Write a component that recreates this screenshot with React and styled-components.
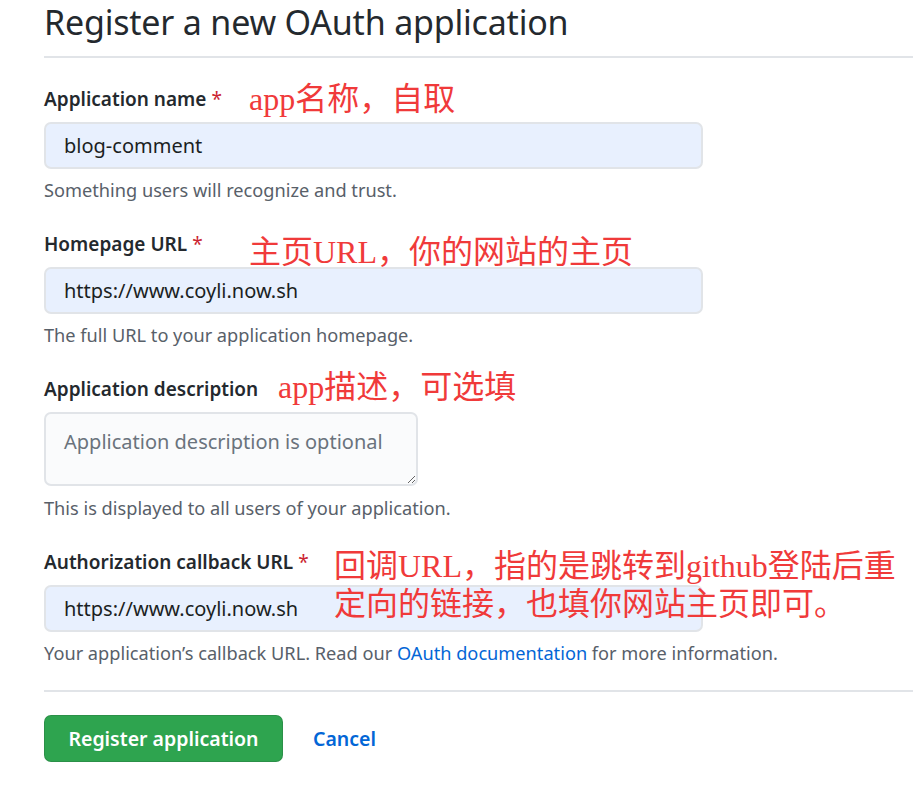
import React from 'react';
import styled, { createGlobalStyle } from 'styled-components';

const GlobalStyle = createGlobalStyle`
  body {
    margin: 0;
    background: #fff;
    font-family: "Noto Sans", "Open Sans", sans-serif;
    color: #24292e;
  }
`

const Page = styled.div`
  padding-left: 44px;
  width: 869px;
  height: 805px;
  overflow: hidden;
`

const Header = styled.div`
  border-bottom: 2px solid #e1e4e8;
  padding-top: 1px;
  padding-bottom: 13px;
  margin-bottom: 29px;
`

const Title = styled.h2`
  margin: 0;
  font-size: 34px;
  line-height: 42px;
  font-weight: 400;
  letter-spacing: -0.2px;
`

const Group = styled.div`
  position: relative;
  margin-bottom: ${p => p.gap ?? 31}px;
`

const Label = styled.label`
  display: block;
  font-size: 19px;
  line-height: 24px;
  font-weight: 600;
  margin-bottom: 11px;
`

const Star = styled.span`
  color: #cb2431;
  margin-left: 5px;
  font-weight: 400;
`

const Input = styled.input`
  display: block;
  box-sizing: border-box;
  width: 659px;
  height: 47px;
  padding: 0 18px;
  font-family: inherit;
  font-size: 20px;
  color: #1b1f23;
  background: #e8f0fe;
  border: 2px solid #e1e4e8;
  border-radius: 7px;
  outline: none;
`

const Textarea = styled.textarea`
  display: block;
  box-sizing: border-box;
  width: 374px;
  height: 74px;
  padding: 14px 18px;
  font-family: inherit;
  font-size: 20px;
  line-height: 28px;
  color: #24292e;
  background: #fafbfc;
  border: 2px solid #e1e4e8;
  border-radius: 7px;
  outline: none;
  resize: vertical;

  &::placeholder {
    color: #6a737d;
  }
`

const Hint = styled.p`
  margin: ${p => p.top || 10}px 0 0;
  font-size: 18.2px;
  line-height: 22px;
  color: #586069;

  a {
    color: #0366d6;
    text-decoration: none;
  }
`

const Annotation = styled.div`
  position: absolute;
  left: ${p => p.x}px;
  top: ${p => p.y}px;
  font-family: "Liberation Serif", "Noto Sans CJK SC", serif;
  font-size: 32px;
  line-height: 38px;
  color: #f03a3a;
  white-space: nowrap;
  pointer-events: none;
`

const Divider = styled.hr`
  border: 0;
  border-top: 2px solid #e1e4e8;
  margin: 26px 0 23px;
`

const Actions = styled.div`
  display: flex;
  align-items: center;
  gap: 30px;
`

const Button = styled.button`
  box-sizing: border-box;
  width: 239px;
  height: 47px;
  font-family: inherit;
  font-size: 19.5px;
  font-weight: 600;
  color: #fff;
  background: #2ea44f;
  border: 1px solid rgba(27, 31, 35, .15);
  border-radius: 7px;
`

const Cancel = styled.a`
  font-size: 19.5px;
  font-weight: 600;
  color: #0366d6;
  text-decoration: none;
`

const App = () => (
  <Page>
    <GlobalStyle />
    <Header>
      <Title>Register a new OAuth application</Title>
    </Header>

    <Group>
      <Label>Application name<Star>*</Star></Label>
      <Input readOnly value="blog-comment" />
      <Hint>Something users will recognize and trust.</Hint>
      <Annotation x={205} y={-7}>app名称，自取</Annotation>
    </Group>

    <Group>
      <Label>Homepage URL<Star>*</Star></Label>
      <Input readOnly value="https://www.coyli.now.sh" />
      <Hint>The full URL to your application homepage.</Hint>
      <Annotation x={205} y={1}>主页URL，你的网站的主页</Annotation>
    </Group>

    <Group>
      <Label>Application description</Label>
      <Textarea readOnly placeholder="Application description is optional" />
      <Hint top={11}>This is displayed to all users of your application.</Hint>
      <Annotation x={234} y={-9}>app描述，可选填</Annotation>
    </Group>

    <Group gap={0}>
      <Label>Authorization callback URL<Star>*</Star></Label>
      <Input readOnly value="https://www.coyli.now.sh" />
      <Hint>
        Your application’s callback URL. Read our <a href="#">OAuth documentation</a> for more information.
      </Hint>
      <Annotation x={290} y={-3}>
        回调URL，指的是跳转到github登陆后重<br />定向的链接，也填你网站主页即可。
      </Annotation>
    </Group>

    <Divider />

    <Actions>
      <Button>Register application</Button>
      <Cancel href="#">Cancel</Cancel>
    </Actions>
  </Page>
);

export default App;
